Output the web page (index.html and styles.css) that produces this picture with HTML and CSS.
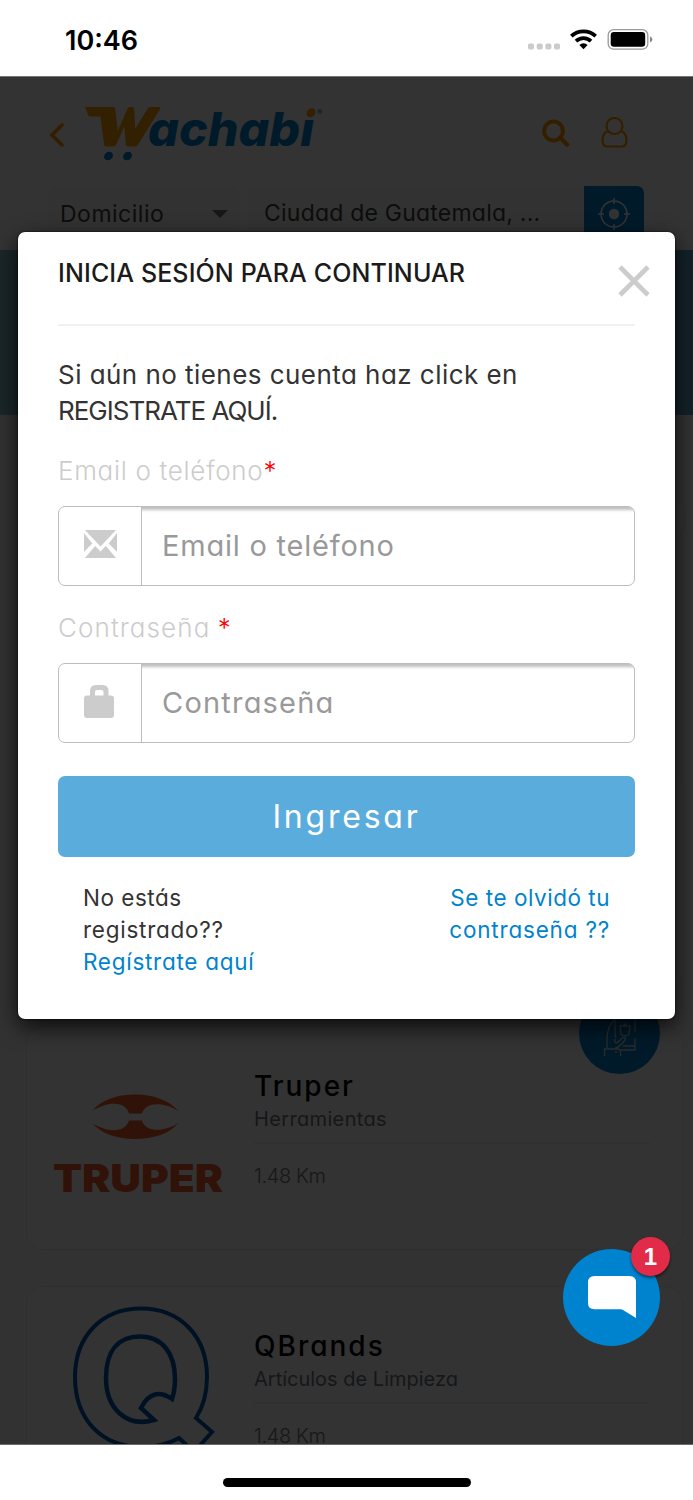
FILE: index.html
```html
<!DOCTYPE html>
<html lang="es">
<head>
<meta charset="utf-8">
<title>Wachabi</title>
<link rel="stylesheet" href="styles.css">
</head>
<body>
<div class="status">
  <span class="clock">10:46</span>
  <svg class="status-icons" width="126" height="24" viewBox="528 28 126 24">
    <g fill="#cbcbcb"><rect x="528" y="43.5" width="6" height="6" rx="1.8"/><rect x="536.7" y="43.5" width="6" height="6" rx="1.8"/><rect x="545.4" y="43.5" width="6" height="6" rx="1.8"/><rect x="554" y="43.5" width="6" height="6" rx="1.8"/></g>
    <g fill="none" stroke="#000" stroke-width="3.7"><path d="M571.3 36.2a17.6 17.6 0 0 1 24.4 0"/><path d="M576 41.2a10.8 10.8 0 0 1 15 0"/></g>
    <path d="M579.4 44.9a6 6 0 0 1 8.2 0l-4.1 4.4z"/>
    <rect x="608.2" y="29.6" width="39.6" height="19.6" rx="5.5" fill="none" stroke="#999" stroke-width="1.3"/>
    <rect x="610.7" y="32" width="34.5" height="14.8" rx="3.2"/>
    <path d="M650 36.3q2.4 1.2 2.4 3.1t-2.4 3.1z" fill="#888"/>
  </svg>
</div>
<main class="app">
  <header class="header">
    <div class="topbar">
      <svg class="back" width="16" height="26" viewBox="0 0 16 26"><path d="M13 3 3 13 13 23" fill="none" stroke="#ff9c00" stroke-width="3.800" stroke-linecap="round"/></svg>
      <svg class="logo" width="246" height="60" viewBox="84 103 246 60">
        <path fill="#ffa008" d="M86 107h27q2 0 2.300 2l2.500 22 9.500-22q1-2 3-2h2q2 0 2 2l1 20 12-20q1-2 3-2h8q3 0 1.500 2.500l-22 35.500q-1 1.500-3 1.500h-7q-2 0-2-2l-1.500-18-8 18q-1 2-3 2h-7q-2 0-2.300-2l-3.700-28H90q-1.500 0-2-1.500l-2.500-7q-.5-2 .5-2z"/>
        <g fill="#0083cf"><ellipse cx="108.500" cy="156" rx="4.800" ry="4" transform="rotate(-40 108.500 156)"/><ellipse cx="127.500" cy="156" rx="4.800" ry="4" transform="rotate(-40 127.500 156)"/>
        <text class="logo-text" x="148" y="146" textLength="166" lengthAdjust="spacingAndGlyphs">achabi</text>
        <text class="logo-reg" x="317" y="115">®</text></g>
        <path fill="#fff" d="M303 105h14l-3 14h-15z"/>
        <ellipse cx="311" cy="112.800" rx="4.900" ry="4" fill="#ffa008" transform="rotate(-45 311 112.800)"/>
      </svg>
      <svg class="search" width="28" height="28" viewBox="0 0 28 28"><g fill="none" stroke="#ff9c00" stroke-width="4"><circle cx="11.500" cy="12" r="9.400"/><path d="m18 18.500 7 7" stroke-width="4.500" stroke-linecap="round"/></g></svg>
      <svg class="user" width="27" height="31" viewBox="0 0 27 31"><g fill="none" stroke="#ff9c00" stroke-width="2.200"><circle cx="13.500" cy="9" r="8"/><path d="M7 14C3 15.500 1.500 18.500 1.500 23.500c0 4 2 6 5 6h14c3 0 5-2 5-6 0-5-1.500-8-5.500-9.500"/></g></svg>
    </div>
    <div class="location">
      <div class="mode"><span>Domicilio</span><i class="caret"></i></div>
      <div class="city"><span>Ciudad de Guatemala, ...</span></div>
      <div class="locate"><svg width="32" height="32" viewBox="0 0 32 32"><circle cx="16" cy="16" r="13" fill="none" stroke="#fff" stroke-width="1.500"/><circle cx="16" cy="16" r="5.200" fill="#fff"/><path d="M16 0v6M16 26v6M0 16h6M26 16h6" stroke="#fff" stroke-width="1.500"/></svg></div>
    </div>
  </header>
  <div class="banner"></div>
  <div class="carousel"><i class="next"></i></div>
  <div class="stores">
    <section class="card"></section>
    <section class="card">
      <svg class="brand" width="176" height="224" viewBox="50 1025 176 224">
        <g fill="#f25a28"><path d="M92 1111c9-11 25-16.500 43-16.500s34 5.500 43.500 16.500c-14-9-33-10-36.500 2.500h-13c-4-13-22-12-37-2.500z"/><path d="M92 1123c10 11 25 16 43 16s34-5 43.500-16c-14 9-33 10-36.500-2.500h-13c-4 13-22 12-37 2.500z"/>
        <text class="truper" x="53" y="1191.500" textLength="170" lengthAdjust="spacingAndGlyphs">TRUPER</text></g>
      </svg>
      <div class="info"><h3>Truper</h3><p class="s1">Herramientas</p><p class="km">1.48 Km</p></div>
      <div class="badge"><svg width="34" height="44" viewBox="603 1010 34 44"><g fill="none" stroke="#d8d8d8" stroke-width="1.300"><path d="M604.500 1054v-7h13q3 0 3 3v4M607 1046v-9c0-8 3-15 8-20M615 1012v20q0 2 1 4M615 1046c4 0 7-4 10-8 1-2-1-3-3-2l-4 4c-2 2-4 0-3-3M621 1048h14v-4h-12M635 1043v-7M635 1030v-20M620 1024h10l-1 8q-1 2-4 2t-4-2zM623 1024l2-2 2 2"/></g><circle cx="616" cy="1050" r="1" fill="#d8d8d8"/></svg></div>
    </section>
    <section class="card">
      <svg class="brand" width="176" height="224" viewBox="50 1285 176 224">
        <g fill="none" stroke="#0058ad" stroke-width="4"><path d="M179 1438c-11 6-24 9-37 9-42 0-67-29-67-70 0-40 26-68.500 66-68.500s66 28.500 66 68.500c0 16-4 30-11 41l16 14-18 20z"/>
        <path stroke-width="4.500" d="M154 1420c-28 8-48-12-48-42 0-27 12-41.500 34-41.500s35 16.500 35 42.500c0 8-1 14-3 20-12-8-23-7-31 9z"/></g>
      </svg>
      <div class="info"><h3>QBrands</h3><p class="s2">Artículos de Limpieza</p><p class="km">1.48 Km</p></div>
    </section>
  </div>
  <div class="overlay"></div>
  <div class="modal">
    <div class="modal-head"><h2>INICIA SESIÓN PARA CONTINUAR</h2></div>
    <svg class="close" width="32" height="32" viewBox="0 0 32 32"><path d="m2 2 28 28M30 2 2 30" stroke="#ccc" stroke-width="4.600"/></svg>
    <p class="intro"><span class="l1">Si aún no tienes cuenta haz click en</span><br><span class="l2">REGISTRATE AQUÍ.</span></p>
    <label class="label"><span class="lb1">Email o teléfono</span><span class="req">*</span></label>
    <div class="field">
      <div class="addon"><svg width="33" height="28" viewBox="0 0 34 28" preserveAspectRatio="none"><path fill="#ccc" d="M1 0h32L17 16.500zM0 3l8.500 10.500L0 22zM34 3l-8.500 10.500L34 22zM1 28l10.500-12 5.500 5.500 5.500-5.500L33 28z"/></svg></div>
      <div class="input"><span class="ph1">Email o teléfono</span></div>
    </div>
    <label class="label"><span class="lb2">Contraseña</span> <span class="req">*</span></label>
    <div class="field">
      <div class="addon"><svg width="34" height="34" viewBox="0 0 34 34"><path fill="#ccc" fill-rule="evenodd" d="M3 11.500h3V7q0-6 6-6h6.500q6 0 6 6v4.500H27q3 0 3 3V31q0 3-3 3H3q-3 0-3-3V14.500q0-3 3-3zM11 11.500h8.500V8q0-2-2-2H13q-2 0-2 2z"/></svg></div>
      <div class="input"><span class="ph2">Contraseña</span></div>
    </div>
    <button class="submit">Ingresar</button>
    <div class="links">
      <div><span class="k1">No estás</span><br><span class="k2">registrado??</span><br><a class="k3">Regístrate aquí</a></div>
      <div class="forgot"><a class="k4">Se te olvidó tu</a><br><a class="k5">contraseña ??</a></div>
    </div>
  </div>
  <div class="chat"><svg width="48" height="44" viewBox="0 0 48 44"><path fill="#fff" d="M6.500 0h35q6.500 0 6.500 6.500V42L35 34q-1-.8-2.500-.8h-26Q0 33.200 0 27V6.500Q0 0 6.500 0z"/></svg><span class="count">1</span></div>
</main>
<footer class="home"><i class="bar"></i></footer>
</body>
</html>
```
FILE: styles.css
```css
* { box-sizing: border-box; }
body { margin: 0; width: 693px; height: 1500px; overflow: hidden; background: #fff; font-family: Inter, "Open Sans", sans-serif; font-feature-settings: "cv11"; color: #333; }
h2, h3, p { margin: 0; font-weight: 400; }
svg { display: block; flex: none; }
span, a { white-space: nowrap; }

.status { height: 76px; padding: 4px 39px 0 65px; display: flex; align-items: center; justify-content: space-between; }
.clock { font-size: 27px; font-weight: 600; color: #000; font-feature-settings: normal; }

.app { position: relative; height: 1369px; overflow: hidden; background: #f7f7f7; }
.header { height: 174px; background: #fff; }
.topbar { height: 110px; padding: 0 66px 0 49px; display: flex; align-items: center; }
.back { margin-top: 7px; }
.logo { margin-left: 19px; margin-top: 4px; }
.search { margin-left: 212px; margin-top: 3px; }
.user { margin-left: 31px; margin-top: 2px; }
.location { height: 58px; padding: 0 49px; display: flex; font-size: 23px; color: #444; }
.mode { width: 190px; margin-right: 8px; padding: 0 11px 2px; display: flex; align-items: center; justify-content: space-between; background: #fafafa; border-radius: 7px; }
.mode span { letter-spacing: .5px; }
.caret { border: 8px solid transparent; border-top-color: #6c757d; border-bottom: 0; }
.city { width: 337px; padding: 0 0 4px 17px; display: flex; align-items: center; background: #fafafa; }
.city span { letter-spacing: .22px; }
.locate { width: 60px; padding-bottom: 2px; display: flex; justify-content: center; align-items: center; background: #0083cf; border-radius: 0 7px 7px 0; }

.banner { height: 165px; background: linear-gradient(90deg, #84bccb, #62a5c5); }
.carousel { height: 351px; display: flex; justify-content: flex-end; padding: 72px 8px 0; }
.next { width: 64px; height: 64px; border-radius: 50%; background: #fff; border: 1px solid #eee; }
.stores { padding: 0 10px 0 26px; display: grid; gap: 36px; }
.card { position: relative; height: 224px; background: #fff; border: 1px solid #ececec; border-radius: 18px; padding-left: 23px; display: flex; }
.brand { margin-top: -2px; }
.info { margin-left: 28px; width: 396px; padding-top: 41px; color: #6c757d; }
.info h3 { font-size: 28px; line-height: 36px; font-weight: 500; color: #000; letter-spacing: 2px; }
.info p { font-size: 20px; line-height: 30px; }
.info .s1 { letter-spacing: .35px; }
.info .km { margin-top: 8px; border-top: 2px solid #eee; padding-top: 17px; font-weight: 300; color: #777; letter-spacing: -.4px; }
.badge { position: absolute; top: -34px; right: 22px; width: 81px; height: 81px; border-radius: 50%; background: #0083cf; display: flex; align-items: center; justify-content: center; }
.logo-text { font: italic 800 47px Inter, sans-serif; font-feature-settings: "cv11"; }
.logo-reg { font: 700 8px Inter, sans-serif; }
.truper { font: 900 38px Inter, sans-serif; }

.overlay { position: absolute; inset: 0; background: rgba(0,0,0,.8); border-top: 1px solid #747474; border-bottom: 1px solid #6b6b6b; background-clip: padding-box; }
.modal { position: absolute; left: 18px; top: 156px; width: 657px; height: 787px; padding: 0 40px; background: #fff; border-radius: 7px; box-shadow: 0 8px 22px rgba(0,0,0,.75), 0 0 2px #000; }
.modal-head { height: 94px; padding-top: 23px; border-bottom: 2px solid #f1f1f1; }
.modal-head h2 { font-size: 25px; line-height: 36px; font-weight: 500; color: #1b1b1b; letter-spacing: .12px; white-space: nowrap; }
.close { position: absolute; left: 600px; top: 33px; }
.intro { margin-top: 31px; font-size: 26px; line-height: 36px; }
.l1 { letter-spacing: .45px; }
.l2 { letter-spacing: -1px; }
.label { display: block; margin-top: 24px; height: 36px; font-size: 26px; line-height: 36px; font-weight: 300; color: #ccc; }
.lb1 { letter-spacing: .7px; }
.lb2 { letter-spacing: 1.1px; }
.req { color: #f00; font-weight: 300; }
.field { margin-top: 17px; height: 80px; display: flex; border: 1px solid #bdbdbd; border-radius: 7px; overflow: hidden; }
.addon { width: 83px; padding-left: 25px; padding-bottom: 4px; display: flex; align-items: center; border-right: 1px solid #bdbdbd; }
.input { flex: 1; padding-left: 20px; padding-bottom: 2px; font-size: 29px; color: #999; display: flex; align-items: center; box-shadow: inset 0 6px 3px -3px rgba(0,0,0,.25); }
.ph1 { letter-spacing: .78px; }
.ph2 { letter-spacing: 1.2px; }
.submit { display: block; width: 577px; height: 81px; margin-top: 33px; padding: 0; border: 0; border-radius: 7px; background: #5aacdd; color: #fff; font: 400 32px Inter, sans-serif; font-feature-settings: "cv11"; letter-spacing: 2.800px; }
.links { margin-top: 25px; padding: 0 25px; display: flex; justify-content: space-between; font-size: 22.500px; line-height: 32.200px; }
.links a { color: #0083cf; }
.forgot { text-align: right; }
.k1 { letter-spacing: .5px; }
.k2 { letter-spacing: .75px; }
.k3 { letter-spacing: .72px; }
.k4 { letter-spacing: .52px; }
.k5 { letter-spacing: .8px; }
.chat { position: absolute; left: 563px; top: 1173px; width: 97px; height: 97px; border-radius: 50%; background: #0083cf; padding: 27px 0 0 25px; }
.count { position: absolute; left: 68px; top: -12px; width: 39px; height: 39px; border-radius: 50%; background: #e22b48; color: #fff; font: 700 24px/39px "Liberation Sans", sans-serif; text-align: center; box-shadow: 0 2px 3px rgba(0,0,0,.5); }

.home { height: 55px; display: flex; justify-content: center; padding-top: 33px; }
.bar { width: 248px; height: 9px; border-radius: 5px; background: #000; }
```
